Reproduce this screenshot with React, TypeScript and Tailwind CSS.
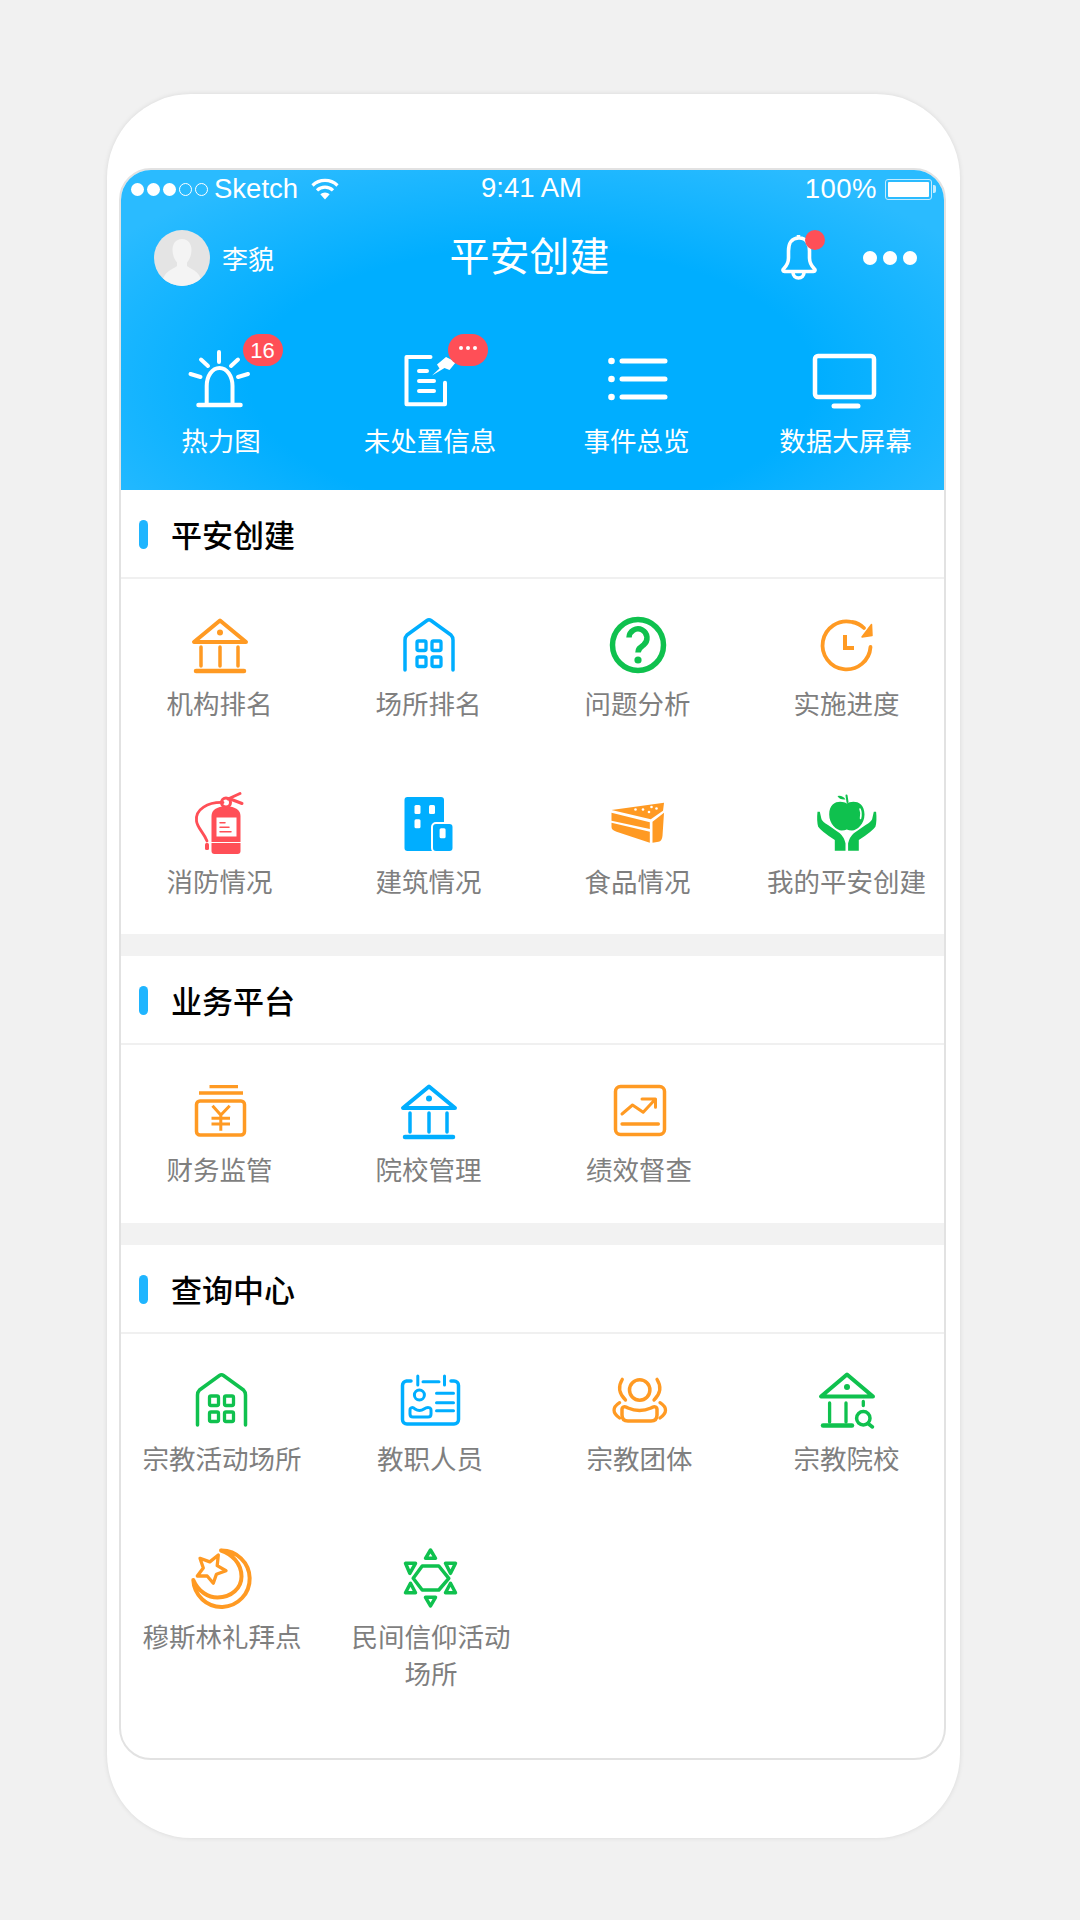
const ORANGE = '#ff9a23'
const BLUE = '#00aeff'
const GREEN = '#0fc14e'
const RED = '#ff4f57'

function Svg({ children }: { children: React.ReactNode }) {
  return (
    <svg width="64" height="64" viewBox="0 0 64 64" fill="none" strokeLinecap="round" strokeLinejoin="round" className="overflow-visible">
      {children}
    </svg>
  )
}

function Bank({ color }: { color: string }) {
  return (
    <Svg>
      <path d="M32 7.500 6 29h52z" stroke={color} strokeWidth="4" />
      <circle cx="32" cy="19.500" r="3" fill={color} />
      <path d="M13 34v19M32 34v19M50 34v19" stroke={color} strokeWidth="3.500" />
      <path d="M8 58h48" stroke={color} strokeWidth="4.500" />
    </Svg>
  )
}

function House({ color, dx = 0 }: { color: string; dx?: number }) {
  return (
    <Svg>
      <g transform={`translate(${dx} 0)`} stroke={color}>
        <path d="M8 57V27q0-3 2-5L30 7.500q2-1.500 4 0L54 22q2 2 2 5v30" strokeWidth="3.500" />
        <rect x="20" y="28" width="9" height="9.500" rx="1.500" strokeWidth="3.300" />
        <rect x="35" y="28" width="9" height="9.500" rx="1.500" strokeWidth="3.300" />
        <rect x="20" y="44" width="9" height="9.500" rx="1.500" strokeWidth="3.300" />
        <rect x="35" y="44" width="9" height="9.500" rx="1.500" strokeWidth="3.300" />
      </g>
    </Svg>
  )
}

function Question() {
  return (
    <Svg>
      <circle cx="32" cy="32" r="25.500" stroke={GREEN} strokeWidth="5.500" />
      <path d="M23 24.500a9 9 0 1 1 14.500 7.500c-3.500 2.500-5.500 3.500-5.500 7.500" stroke={GREEN} strokeWidth="5.500" strokeLinecap="butt" />
      <circle cx="32" cy="47" r="3.600" fill={GREEN} />
    </Svg>
  )
}

function Clock() {
  return (
    <Svg>
      <path d="M55.500 34A24 24 0 1 1 37 9c5 .8 9 3 12 6" stroke={ORANGE} strokeWidth="3.800" />
      <path d="M47 24l10-1.500-.5-11z" fill={ORANGE} stroke={ORANGE} strokeWidth="1.500" />
      <path d="M30 22v13h9" stroke={ORANGE} strokeWidth="4" strokeLinecap="butt" strokeLinejoin="miter" />
    </Svg>
  )
}

function Extinguisher() {
  return (
    <Svg>
      <path d="M35 11.500C20 11 7 18 8.500 30c.8 7 7 11 10.500 20" stroke={RED} strokeWidth="2.800" />
      <path d="M40 8 52 2.500M41 7.500 54 12.500" stroke={RED} strokeWidth="3" />
      <circle cx="38" cy="11.500" r="4.500" stroke={RED} strokeWidth="3" />
      <path d="M23.500 25q0-9 14.500-10 14.500 1 14.500 10v26h-29z" fill={RED} />
      <path d="M23.500 52h29v8q0 3-3 3h-23q-3 0-3-3z" fill={RED} />
      <rect x="17" y="52" width="4" height="7" rx="1.500" fill={RED} />
      <rect x="28.500" y="26.500" width="20" height="19" fill="#fff" />
      <path d="M32 31.700h5M32 36.300h9M32 40.700h11" stroke={RED} strokeWidth="1.500" />
    </Svg>
  )
}

function Building() {
  return (
    <Svg>
      <rect x="7.500" y="6" width="39.500" height="54" rx="3" fill={BLUE} />
      <rect x="17.500" y="14" width="6" height="9" rx="1.500" fill="#fff" />
      <rect x="32" y="14" width="6" height="9" rx="1.500" fill="#fff" />
      <rect x="17.500" y="28.300" width="6" height="9" rx="1.500" fill="#fff" />
      <rect x="35" y="32" width="21.500" height="29" rx="4" fill={BLUE} stroke="#fff" strokeWidth="2" />
      <rect x="42.600" y="37.300" width="6" height="10" rx="1.500" fill="#fff" />
    </Svg>
  )
}

function Cake() {
  return (
    <Svg>
      <path d="M5.500 19 58 11.700l-1 8-12.200 8.600z" fill={ORANGE} />
      <g fill="#fff">
        <circle cx="29.500" cy="18.500" r="1.300" />
        <circle cx="37" cy="18.500" r="1.300" />
        <circle cx="43" cy="21" r="1.300" />
        <circle cx="45.500" cy="16" r="1.300" />
        <circle cx="50.500" cy="17.500" r="1.300" />
      </g>
      <path d="M5.500 21.700 43.800 31.300v6.700L5.500 29.700z" fill={ORANGE} />
      <path d="M5.500 31.700 43.800 40.700v11L10.500 40.700Q5.500 39 5.500 36z" fill={ORANGE} />
      <path d="M58 21.700 46.500 30.700v21l6-1q3.500-.5 4-6z" fill={ORANGE} />
    </Svg>
  )
}

function AppleHands() {
  const hand = 'M2.500 20.700Q1.500 30 3.200 35.700Q6 40 19.800 49V59.700H30.500V52.300Q29 46 24.800 42.300L13 34Q7.500 31 6.500 28.300L4.800 20.700z'
  return (
    <Svg>
      <path d="M31.800 12.500C36 9.500 49.500 8.500 49.500 23.500 49.500 33 42 39.500 37 39.500q-3 0-5.200-1-2.200 1-5.200 1c-5 0-12.400-6.500-12.400-16 0-15 13.400-14 17.600-11z" fill={GREEN} />
      <path d="M31.500 4.500 32.500 11" stroke={GREEN} strokeWidth="2" />
      <path d="M22.500 5q5-1 8 3.500q-6 .5-8-3.500z" fill={GREEN} />
      <path d="M45 18q1.800 4 .5 9.500" stroke="#fff" strokeWidth="1.500" />
      <path d={hand} fill={GREEN} />
      <path d={hand} fill={GREEN} transform="matrix(-1 0 0 1 63.600 0)" />
    </Svg>
  )
}

function Yen() {
  return (
    <Svg>
      <path d="M21.500 7.700H50M11 14h44" stroke={ORANGE} strokeWidth="3.300" strokeLinecap="butt" />
      <rect x="8.500" y="22" width="48" height="34" rx="3.500" stroke={ORANGE} strokeWidth="3.500" />
      <path d="M24.500 26.700 32.800 36l8.900-9.300M32.800 36v15.700M23.500 39.300H42M23.500 45H42" stroke={ORANGE} strokeWidth="3" strokeLinecap="butt" strokeLinejoin="miter" />
    </Svg>
  )
}

function ChartCard() {
  return (
    <Svg>
      <rect x="9.500" y="7.500" width="49" height="48" rx="5" stroke={ORANGE} strokeWidth="3.500" />
      <path d="M16 35 26.500 26l10.700 7.300L49.500 20M36 20h13.500v8.300" stroke={ORANGE} strokeWidth="3" />
      <path d="M16 45h36.400" stroke={ORANGE} strokeWidth="3.300" />
    </Svg>
  )
}

function IdCard() {
  return (
    <Svg>
      <path d="M14 13H9.500a4.500 4.500 0 0 0-4 4.500V51.500a4.500 4.500 0 0 0 4.500 4.500h47a4.500 4.500 0 0 0 4.500-4.500V17.500a4.500 4.500 0 0 0-4.500-4.500H54" stroke={BLUE} strokeWidth="3.500" />
      <path d="M20.800 8v9M47.500 8v9M26 13.700h16" stroke={BLUE} strokeWidth="3" />
      <circle cx="22.400" cy="27" r="5" stroke={BLUE} strokeWidth="3" />
      <path d="M13 42c0-3 3-3 5-1q4.500 3 9 0c3-2 7-2 7 1v4q0 3-3 3H16q-3 0-3-3z" stroke={BLUE} strokeWidth="3" />
      <path d="M39.500 25.300h17M39.500 34.700h17M39.500 42.700h17" stroke={BLUE} strokeWidth="3" />
    </Svg>
  )
}

function People() {
  return (
    <Svg>
      <circle cx="33.700" cy="22" r="10.200" stroke={ORANGE} strokeWidth="3.500" />
      <path d="M16.300 11.300Q9.500 22 19.500 32M51 11.300Q58 22 48 32" stroke={ORANGE} strokeWidth="3.300" />
      <path d="M16 41.500c0-3 3-3.500 6-1.500q11.500 5 23 0c3-2 6-1.500 6 1.500V47q0 6-6 6H22q-6 0-6-6z" stroke={ORANGE} strokeWidth="3.500" />
      <path d="M13.600 34.700Q2.500 42 13.600 50M54 34.700Q65 42 54 50" stroke={ORANGE} strokeWidth="3.300" />
    </Svg>
  )
}

function BankSearch() {
  return (
    <Svg>
      <path d="M32 6.500 6 28.500h52z" stroke={GREEN} strokeWidth="4" />
      <circle cx="32" cy="19" r="3" fill={GREEN} />
      <path d="M14.600 35v19M31 35v19M48.300 33.500v4" stroke={GREEN} strokeWidth="3.300" />
      <path d="M8 57.500h29" stroke={GREEN} strokeWidth="4.500" />
      <circle cx="48.300" cy="50.300" r="6.700" stroke={GREEN} strokeWidth="3.500" />
      <path d="m53 55.500 4.500 3.500" stroke={GREEN} strokeWidth="3.500" />
    </Svg>
  )
}

function Moon() {
  return (
    <Svg>
      <g transform="translate(-1.500 0)" stroke={ORANGE}>
        <path d="M34.500 4.500A28.200 28.200 0 1 1 6.800 34C12 46 22 51.500 31 51.500 45 51.500 55 42 55 30.500 55 17 45 8 34.500 4.500z" strokeWidth="4" />
        <path d="M31.800 9 30.700 19.600 39.500 24.700 29.900 28.200 26.800 37.300 20.700 30 10.800 30 16.800 22 13.500 12.300 23.300 15.900z" strokeWidth="3.300" />
      </g>
    </Svg>
  )
}

function StarDavid() {
  return (
    <Svg>
      <g stroke={GREEN} strokeWidth="3.500">
        <path d="M33.500 4 38.500 12.300H28.500z" />
        <path d="M33.500 60 38.500 51.300H28.500z" />
        <path d="M8.500 17.300H18.500L12.800 27.300z" />
        <path d="M58.500 17.300H48.500L53.500 27.300z" />
        <path d="M8.500 46.700H18.500L13.500 37.300z" />
        <path d="M58.500 46.700H48.500L53.500 37.300z" />
        <path d="M25.200 20H41.800L51.800 32.300 41.800 44H25.200L16.200 32.300z" />
      </g>
    </Svg>
  )
}

function Alarm() {
  return (
    <Svg>
      <g stroke="#fff" strokeWidth="4">
        <path d="M32 5v10M14 12.500l7 6.500M51 12.500l-7 6.500M3.500 27l10 3M61 27l-10 3" />
        <path d="M19.700 57V39c0-10 5.500-18 12.800-18s13 8 13 18v18" />
        <path d="M11.500 58h42" strokeWidth="4.500" />
      </g>
    </Svg>
  )
}

function Report() {
  return (
    <Svg>
      <path d="M34.500 10H10.500v47.300H49V35.700" stroke="#fff" strokeWidth="4" />
      <path d="M23 24h8M23 34h15M23 44h15" stroke="#fff" strokeWidth="4" />
      <path d="M36 28.500 43.500 21.500 41 17.500 50 10 60 15 53.500 23 48.500 21z" fill="#fff" />
    </Svg>
  )
}

function ListIcon() {
  return (
    <Svg>
      <g fill="#fff">
        <circle cx="6.500" cy="14" r="3.300" />
        <circle cx="6.500" cy="32" r="3.300" />
        <circle cx="6.500" cy="50" r="3.300" />
      </g>
      <path d="M17 14h43M17 32h43M17 50h43" stroke="#fff" strokeWidth="5" />
    </Svg>
  )
}

function Monitor() {
  return (
    <Svg>
      <rect x="1" y="9" width="59" height="41" rx="3" stroke="#fff" strokeWidth="4.500" />
      <path d="M20 59h24" stroke="#fff" strokeWidth="5" />
    </Svg>
  )
}

function Bell() {
  return (
    <svg width="40" height="48" viewBox="0 0 40 48" fill="none" stroke="#fff" strokeWidth="3.600" strokeLinejoin="round" className="overflow-visible">
      <path d="M19.500 5c-7 0-10 6-10 13v7c0 5-2 8-5 11-1 1-.5 2.500 1 2.500h29c1.500 0 2-1.500 1-2.500-3-3-5-6-5-11v-7c0-7-3-13-10-13zM19.500 5V2" />
      <path d="M14 39.500a5.500 5.500 0 0 0 11 0" />
    </svg>
  )
}

function Wifi() {
  return (
    <svg width="28" height="22" viewBox="0 0 28 22" fill="none" stroke="#fff" strokeWidth="3.200">
      <path d="M1.500 7.500a18 18 0 0 1 25 0M6 12.300a11.500 11.500 0 0 1 16 0" />
      <path d="M14 21.500 9.300 16.300a6.800 6.800 0 0 1 9.400 0z" fill="#fff" stroke="none" />
    </svg>
  )
}

function Avatar() {
  return (
    <div className="w-[56px] h-[56px] rounded-full overflow-hidden bg-[#e4e4e4]">
      <svg width="56" height="56" viewBox="0 0 56 56">
        <path d="M28 9c-6.500 0-9.500 5-9.500 11 0 5 2 9.500 4.500 12.500v3.500c-3 3-15 5-15 20h40c0-15-12-17-15-20v-3.500c2.500-3 4.500-7.500 4.500-12.500 0-6-3-11-9.500-11z" fill="#f4f4f4" />
      </svg>
    </div>
  )
}

function Badge({ children, className }: { children: React.ReactNode; className: string }) {
  return (
    <div className={`absolute flex items-center justify-center gap-[3px] w-[40px] h-[32px] rounded-[16px] bg-[#ff4f57] text-white text-[22px] font-['Liberation_Sans',sans-serif] ${className}`}>
      {children}
    </div>
  )
}

function HeaderItem({
  icon,
  label,
  badge,
  labelClass = '',
}: {
  icon: React.ReactNode
  label: string
  badge?: React.ReactNode
  labelClass?: string
}) {
  return (
    <div className="flex flex-col items-center">
      <div className="relative w-[64px] h-[64px]">
        {icon}
        {badge}
      </div>
      <div className={`mt-[11px] h-[36px] text-[26.5px] leading-[36px] text-white whitespace-nowrap ${labelClass}`}>{label}</div>
    </div>
  )
}

function GridItem({ icon, label, labelClass = '' }: { icon: React.ReactNode; label: string; labelClass?: string }) {
  return (
    <div className="flex flex-col items-center h-[178px] pt-[34px]">
      <div className="w-[64px] h-[64px]">{icon}</div>
      <div className={`mt-[7px] px-[22px] text-center text-[26.5px] leading-[37px] text-[#7f7f7f] ${labelClass}`}>{label}</div>
    </div>
  )
}

function SectionTitle({ title }: { title: string }) {
  return (
    <div className="flex items-center h-[89px] pl-[18px] border-b-2 border-[#f0f0f0]">
      <div className="w-[9px] h-[29px] mt-[1px] rounded-full bg-[#1fb5ff]" />
      <div className="ml-[23px] text-[31px] leading-[40px] font-medium text-black">{title}</div>
    </div>
  )
}

export default function App() {
  return (
    <div className="w-[1080px] h-[1920px] pt-[94px] pl-[107px] bg-[#f1f1f1] font-['Noto_Sans_CJK_SC',sans-serif] overflow-hidden">
      <div className="w-[853px] h-[1744px] pt-[74px] pl-[12px] rounded-[84px] bg-white shadow-[0_0_5px_rgba(0,0,0,0.1)]">
        <div className="w-[827px] h-[1592px] rounded-[32px] border-2 border-[#e2e2e2] overflow-hidden bg-white">
          <div className="-mx-[2px] -mt-[2px] h-[322px] bg-[radial-gradient(ellipse_62%_75%_at_50%_66%,#00aeff_55%,#2abbff_100%)]">
            {/* status bar */}
            <div className="relative flex items-center justify-between h-[40px] pl-[12px] pr-[10px] pt-[2px] text-white text-[27.5px] font-['Liberation_Sans',sans-serif]">
              <div className="flex items-center">
                <div className="flex gap-[3px]">
                  <div className="w-[13px] h-[13px] rounded-full bg-white" />
                  <div className="w-[13px] h-[13px] rounded-full bg-white" />
                  <div className="w-[13px] h-[13px] rounded-full bg-white" />
                  <div className="w-[13px] h-[13px] rounded-full border border-white" />
                  <div className="w-[13px] h-[13px] rounded-full border border-white" />
                </div>
                <span className="ml-[6px] leading-[32px]">Sketch</span>
                <div className="ml-[13px]">
                  <Wifi />
                </div>
              </div>
              <span className="absolute left-[362px] top-[4px] leading-[32px]">9:41 AM</span>
              <div className="flex items-center">
                <span className="leading-[32px] tracking-[0.5px]">100%</span>
                <div className="ml-[8px] w-[47px] h-[21px] rounded-[3px] border border-[#c5ecff] p-[2px]">
                  <div className="w-full h-full bg-white rounded-[1px]" />
                </div>
                <div className="ml-[1px] w-[3px] h-[8px] rounded-r-[2px] bg-[#c5ecff]" />
              </div>
            </div>

            {/* nav */}
            <div className="grid grid-cols-[1fr_auto_1fr] items-center mt-[22px] h-[56px] pl-[35px] pr-[29px]">
              <div className="flex items-center">
                <Avatar />
                <span className="ml-[12px] text-[26px] leading-[36px] text-white">李貌</span>
              </div>
              <div className="text-[40px] leading-[52px] text-white -mt-[8px] mr-[12px]">平安创建</div>
              <div className="flex items-center justify-end">
                <div className="relative -mt-[2px]">
                  <Bell />
                  <div className="absolute -top-[3px] left-[26px] w-[20px] h-[20px] rounded-full bg-[#ff4f57]" />
                </div>
                <div className="flex gap-[6px] ml-[44px]">
                  <div className="w-[14px] h-[14px] rounded-full bg-white" />
                  <div className="w-[14px] h-[14px] rounded-full bg-white" />
                  <div className="w-[14px] h-[14px] rounded-full bg-white" />
                </div>
              </div>
            </div>

            {/* shortcuts */}
            <div className="grid grid-cols-[repeat(4,209px)] -ml-[5px] mt-[61px]">
              <HeaderItem icon={<Alarm />} label="热力图" labelClass="ml-[5px]" badge={<Badge className="left-[56px] -top-[13px]">16</Badge>} />
              <HeaderItem
                icon={<Report />}
                label="未处置信息"
                labelClass="ml-[5px]"
                badge={
                  <Badge className="left-[52px] -top-[13px] pb-[4px]">
                    <div className="w-[4px] h-[4px] rounded-full bg-white" />
                    <div className="w-[4px] h-[4px] rounded-full bg-white" />
                    <div className="w-[4px] h-[4px] rounded-full bg-white" />
                  </Badge>
                }
              />
              <HeaderItem icon={<ListIcon />} label="事件总览" />
              <HeaderItem icon={<Monitor />} label="数据大屏幕" />
            </div>
          </div>

          <SectionTitle title="平安创建" />
          <div className="grid grid-cols-[repeat(4,209px)] -ml-[6px] h-[355px]">
            <GridItem icon={<Bank color={ORANGE} />} label="机构排名" />
            <GridItem icon={<House color={BLUE} />} label="场所排名" />
            <GridItem icon={<Question />} label="问题分析" />
            <GridItem icon={<Clock />} label="实施进度" />
            <GridItem icon={<Extinguisher />} label="消防情况" />
            <GridItem icon={<Building />} label="建筑情况" />
            <GridItem icon={<Cake />} label="食品情况" />
            <GridItem icon={<AppleHands />} label="我的平安创建" />
          </div>

          <div className="h-[22px] bg-[#f2f2f2]" />
          <SectionTitle title="业务平台" />
          <div className="grid grid-cols-[repeat(4,209px)] -ml-[6px] h-[178px]">
            <GridItem icon={<Yen />} label="财务监管" />
            <GridItem icon={<Bank color={BLUE} />} label="院校管理" />
            <GridItem icon={<ChartCard />} label="绩效督查" labelClass="ml-[3px]" />
          </div>

          <div className="h-[22px] bg-[#f2f2f2]" />
          <SectionTitle title="查询中心" />
          <div className="grid grid-cols-[repeat(4,209px)] -ml-[6px]">
            <GridItem icon={<House color={GREEN} dx={1.5} />} label="宗教活动场所" labelClass="ml-[5px]" />
            <GridItem icon={<IdCard />} label="教职人员" labelClass="ml-[3px]" />
            <GridItem icon={<People />} label="宗教团体" labelClass="ml-[4px]" />
            <GridItem icon={<BankSearch />} label="宗教院校" />
            <GridItem icon={<Moon />} label="穆斯林礼拜点" labelClass="ml-[5px]" />
            <GridItem icon={<StarDavid />} label="民间信仰活动场所" labelClass="ml-[5px]" />
          </div>
        </div>
      </div>
    </div>
  )
}
